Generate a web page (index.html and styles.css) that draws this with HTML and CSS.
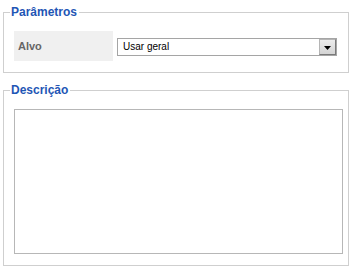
FILE: index.html
```html
<!DOCTYPE html>
<html lang="pt">
<head>
  <meta charset="UTF-8">
  <title>Parâmetros</title>
  <link rel="stylesheet" href="styles.css">
</head>
<body>
  <fieldset class="panel">
    <legend>Parâmetros</legend>
    <div class="param-row">
      <div class="param-label">Alvo</div>
      <span class="select-wrap">
        <select class="param-select">
          <option>Usar geral</option>
        </select>
        <span class="select-btn">
          <svg width="7" height="4" viewBox="0 0 7 4"><path d="M0 0h7L3.5 4z" fill="#000"/></svg>
        </span>
      </span>
    </div>
  </fieldset>

  <fieldset class="panel">
    <legend>Descrição</legend>
    <textarea class="desc"></textarea>
  </fieldset>
</body>
</html>
```

FILE: styles.css
```css
body {
  margin: 0;
  padding: 0 0 0 3px;
  background: #fff;
  font-family: "Liberation Sans", Arial, sans-serif;
  overflow: hidden;
}

.panel {
  box-sizing: border-box;
  width: 346px;
  margin: 5px 0 10px 0;
  padding: 12px 5px 11px 10px;
  border: 1px solid #cfcfcf;
}

.panel legend {
  margin-left: -4px;
  padding: 0 2px 0 1px;
  font-size: 12px;
  line-height: 14px;
  font-weight: bold;
  color: #1f56b5;
}

.param-row {
  display: flex;
  align-items: center;
  gap: 4px;
}

.param-label {
  width: 95px;
  height: 30px;
  padding-left: 4px;
  background: #f0f0f0;
  color: #666;
  font-size: 11px;
  font-weight: bold;
  line-height: 30px;
}

.select-wrap {
  position: relative;
  display: block;
}

.param-select {
  appearance: none;
  -webkit-appearance: none;
  box-sizing: border-box;
  display: block;
  width: 220px;
  height: 18px;
  margin: 1px 0 0 0;
  padding: 0 0 0 5px;
  border: 1px solid #a5a5a5;
  border-radius: 0;
  background: #fff;
  color: #000;
  font-family: "Liberation Sans", Arial, sans-serif;
  font-size: 10px;
}

.select-btn {
  position: absolute;
  top: 2px;
  right: 1px;
  box-sizing: border-box;
  width: 17px;
  height: 16px;
  display: flex;
  align-items: center;
  justify-content: center;
  padding-top: 2px;
  background: linear-gradient(#ececec, #d4d4d4);
  border: 1px solid #7a7a7a;
  border-top-color: #b5b5b5;
  border-left-color: #b5b5b5;
}

.desc {
  box-sizing: border-box;
  display: block;
  width: 329px;
  height: 145px;
  margin: 0;
  border: 1px solid #b7b7b7;
  resize: none;
  background: #fff;
}
```
